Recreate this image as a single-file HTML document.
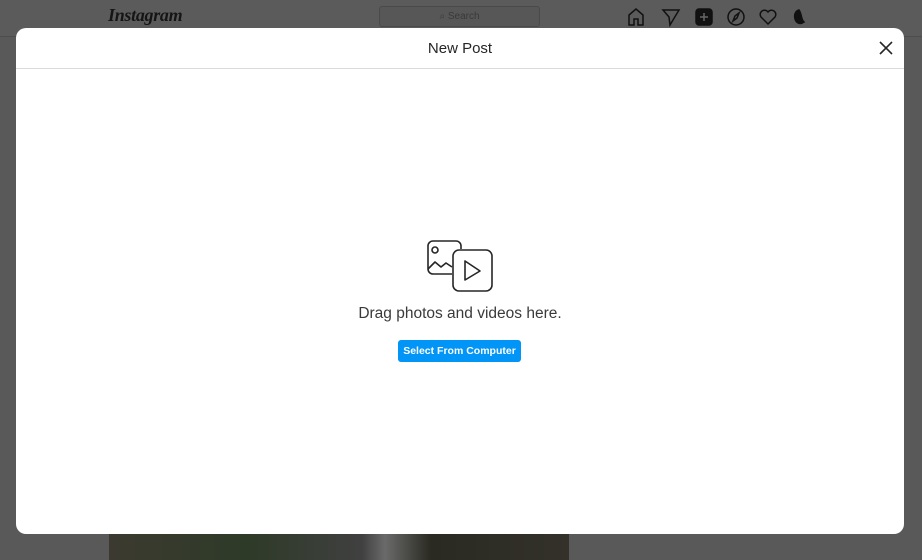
<!DOCTYPE html>
<html><head><style>
*{margin:0;padding:0;box-sizing:border-box}
body{width:922px;height:555px;overflow:hidden;background:#595959;font-family:"Liberation Sans",sans-serif;position:relative}
.top{position:absolute;left:0;top:0;width:922px;height:37px;background:#5b5b5b;border-bottom:1px solid #4e4e4e}
.logo{position:absolute;left:108px;top:5px;font-family:"Liberation Serif",serif;font-style:italic;font-weight:bold;font-size:18px;color:#151515;letter-spacing:-0.3px}
.search{position:absolute;left:379px;top:6px;width:161px;height:21px;border:1px solid #4a4a4a;border-radius:3px;background:#575757;color:#3a3a3a;font-size:10px;text-align:center;line-height:19px}
.photo{position:absolute;left:109px;top:530px;width:460px;height:30px;background:linear-gradient(90deg,#3c3a30,#2e3a28 30%,#404040 55%,#6a6a6a 60%,#2a2a22 70%,#33312a)}
.modal{position:absolute;left:16px;top:28px;width:888px;height:506px;background:#fff;border-radius:10px}
.hd{height:41px;border-bottom:1px solid #dbdbdb;text-align:center;line-height:41px;font-size:15px;color:#262626}
.x{position:absolute;right:10px;top:12px}
.msg{position:absolute;left:0;width:100%;top:277px;text-align:center;font-size:15.5px;color:#3a3a3a}
.btn{position:absolute;left:382px;top:312px;width:123px;height:22px;background:#0095f6;border-radius:3px;color:#fff;font-size:10.5px;font-weight:bold;text-align:center;line-height:22px}
</style></head><body>
<div class="top">
<div class="logo">Instagram</div>
<div class="search">⌕ Search</div>
<svg style="position:absolute;left:626px;top:7px" width="190" height="20" fill="none" stroke="#111" stroke-width="1.5">
<path d="M3 18V8l7-6 7 6v10h-5v-6H8v6z"/>
<path d="M37 3h16l-9 15-1-8z"/>
<rect x="70" y="2" width="16" height="16" rx="3" fill="#111"/><path d="M78 6v8M74 10h8" stroke="#666"/>
<circle cx="110" cy="10" r="8"/><path d="M113 6l-2 5-4 3 2-5z"/>
<path d="M142 17l-7-7a4 4 0 0 1 7-5 4 4 0 0 1 7 5z"/>
<path d="M173 3c-4 1-5 5-4 9 1 4 5 6 9 3-3-2-2-8-5-12z" fill="#111"/>
</svg>
</div>
<div class="photo"></div>
<div class="modal">
<div class="hd">New Post</div>
<svg class="x" width="16" height="16" stroke="#262626" stroke-width="1.6"><path d="M2 2l12 12M14 2L2 14"/></svg>
<svg style="position:absolute;left:409px;top:211px" width="70" height="54" fill="none" stroke="#262626" stroke-width="1.6" stroke-linejoin="round">
<path d="M36 10V7a5 5 0 0 0-5-5H8a5 5 0 0 0-5 5v23a5 5 0 0 0 5 5h19"/>
<circle cx="10" cy="11" r="3"/>
<path d="M3 30l7-7 6 5 5-4 6 4"/>
<rect x="28" y="11" width="39" height="41" rx="6"/>
<path d="M40 22v19l15-9z"/>
</svg>
<div class="msg">Drag photos and videos here.</div>
<div class="btn">Select From Computer</div>
</div>
</body></html>
